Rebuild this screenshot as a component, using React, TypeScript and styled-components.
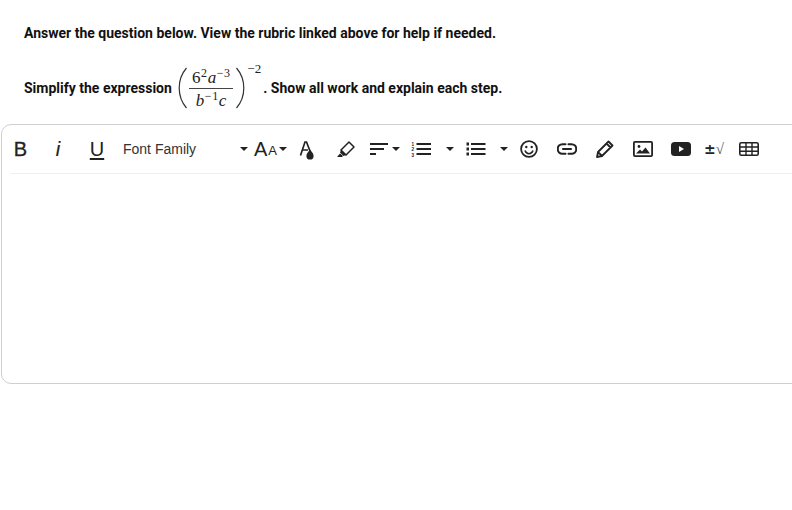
import React from "react";
import styled, { createGlobalStyle } from "styled-components";

const Global = createGlobalStyle`
  html, body { margin: 0; padding: 0; background: #fff; }
  body { width: 792px; height: 510px; overflow: hidden; font-family: Roboto, "Liberation Sans", sans-serif; }
`;
const Page = styled.div`
  width: 792px;
  height: 510px;
  overflow: hidden;
  padding-top: 24px;
  box-sizing: border-box;
`;
const Prompt = styled.p`
  margin: 0 0 0 24px;
  height: 18px;
  font-size: 14px;
  line-height: 18px;
  font-weight: 700;
  color: #111;
  white-space: nowrap;
`;
const ExpressionLine = styled.div`
  margin: 24px 0 0 24px;
  height: 44px;
  display: flex;
  align-items: center;
  font-size: 14px;
  font-weight: 700;
  color: #111;
  white-space: nowrap;
`;
const Formula = styled.span`
  display: flex;
  align-items: center;
  position: relative;
  width: 86px;
  height: 44px;
  margin-left: 2px;
  font-family: "Liberation Serif", serif;
  font-weight: 400;
  color: #222;
`;
const Paren = styled.svg`
  flex: none;
  width: 11px;
  height: 42px;
`;
const Fraction = styled.span`
  display: flex;
  flex-direction: column;
  align-items: center;
  width: 44px;
  margin: 0 2px 0 1px;
`;
const FracTop = styled.span`
  height: 22px;
  line-height: 24px;
  font-size: 17px;
  border-bottom: 1px solid #444;
  width: 100%;
  text-align: center;
  letter-spacing: 0.6px;
`;
const FracBottom = styled.span`
  height: 21px;
  line-height: 23px;
  font-size: 17px;
  letter-spacing: 0.6px;
`;
const Sup = styled.sup`
  font-size: 12px;
  line-height: 0;
  vertical-align: 6px;
`;
const Var = styled.i`
  font-style: italic;
`;
const Exponent = styled.span`
  position: absolute;
  left: 70px;
  top: -4px;
  font-size: 13px;
  line-height: 14px;
`;
const Editor = styled.section`
  margin: 14px 0 0 1px;
  width: 820px;
  height: 260px;
  box-sizing: border-box;
  border: 1px solid #cfcfcf;
  border-radius: 10px;
`;
const Toolbar = styled.div`
  display: flex;
  align-items: center;
  height: 48px;
  color: #222;
`;
const Rule = styled.div`
  height: 1px;
  margin-left: 9px;
  background: #efefef;
`;
const Tool = styled.span<{ $w: number }>`
  flex: none;
  width: ${(p) => p.$w}px;
  height: 48px;
  display: flex;
  align-items: center;
  justify-content: center;
  font-family: "Liberation Sans", Arial, sans-serif;
  color: #222;
`;
const Bold = styled(Tool)`
  font-size: 20px;
  padding-left: 1px;
  box-sizing: border-box;
  -webkit-text-stroke: 0.3px #222;
`;
const Italic = styled(Tool)`
  font-size: 20px;
  font-style: italic;
  -webkit-text-stroke: 0.2px #222;
`;
const Under = styled(Tool)`
  font-size: 20px;
  text-decoration: underline;
  text-decoration-thickness: 2px;
  text-underline-offset: 2px;
`;
const FontSelect = styled(Tool)`
  justify-content: space-between;
  padding: 0 4px 0 7px;
  box-sizing: border-box;
  font-size: 14px;
  color: #333;
`;
const SizeLabel = styled(Tool)`
  font-size: 20px;
  justify-content: flex-start;
  padding-left: 2px;
  box-sizing: border-box;
  gap: 2px;
`;
const SmallA = styled.span`
  font-size: 13px;
  margin-left: -1px;
  padding-top: 3px;
`;
const MathLabel = styled(Tool)`
  font-size: 14px;
  font-weight: 700;
  font-family: "DejaVu Sans", sans-serif;
`;
const Root = styled.span`
  font-weight: 400;
  font-family: "Liberation Serif", serif;
  color: #555;
  font-size: 15px;
`;
const ListNumber = styled.text`
  font-family: "Liberation Sans", sans-serif;
  font-size: 4.6px;
  font-weight: 700;
  fill: #222;
`;

const Caret = () => (
  <svg width="8" height="4" viewBox="0 0 8 4"><path d="M0 0h8L4 4z" fill="#222" /></svg>
);

export default function App() {
  return (
    <Page>
      <Global />
      <Prompt>Answer the question below. View the rubric linked above for help if needed.</Prompt>
      <ExpressionLine>
        <span>Simplify the expression&nbsp;</span>
        <Formula>
          <Paren viewBox="0 0 11 42"><path d="M9.500 1C3.500 8 2.200 14 2.200 21s1.300 13 7.300 20" fill="none" stroke="#333" strokeWidth="1.200" /></Paren>
          <Fraction>
            <FracTop>6<Sup>2</Sup><Var>a</Var><Sup>−3</Sup></FracTop>
            <FracBottom><Var>b</Var><Sup>−1</Sup><Var>c</Var></FracBottom>
          </Fraction>
          <Paren viewBox="0 0 11 42"><path d="M1.500 1c6 7 7.300 13 7.300 20s-1.300 13-7.300 20" fill="none" stroke="#333" strokeWidth="1.200" /></Paren>
          <Exponent>−2</Exponent>
        </Formula>
        <span>. Show all work and explain each step.</span>
      </ExpressionLine>
      <Editor>
        <Toolbar>
          <Bold $w={36}>B</Bold>
          <Italic $w={40}>i</Italic>
          <Under $w={38}>U</Under>
          <FontSelect $w={136}>Font Family<Caret /></FontSelect>
          <SizeLabel $w={36}>A<SmallA>A</SmallA><Caret /></SizeLabel>
          <Tool $w={38}>
            <svg width="18" height="22" viewBox="0 0 18 22"><path d="M2.500 17.500 7 4h1.500L12 13M4.500 12H10" fill="none" stroke="#222" strokeWidth="1.700" /><path d="M12 11.500c2.300 3 3.600 4.500 3.600 6.400a3.600 3.600 0 0 1-7.200 0c0-1.900 1.300-3.400 3.600-6.400z" fill="#222" /></svg>
          </Tool>
          <Tool $w={38}>
            <svg width="20" height="18" viewBox="0 0 20 18"><path d="M14 2l5 5-8 8-5-5z" fill="none" stroke="#222" strokeWidth="1.500" strokeLinejoin="round" /><path d="M6 10l5 5-2.500 1L5 12.500z" fill="#222" /><path d="M2 17l3-3.500 3 2.500-1 1z" fill="#222" /></svg>
          </Tool>
          <Tool $w={40}>
            <svg width="32" height="16" viewBox="0 0 32 16"><path d="M2 3h18M2 8h14M2 13h6" stroke="#222" strokeWidth="2" /><path d="M24 6h8l-4 4z" fill="#222" /></svg>
          </Tool>
          <Tool $w={34}>
            <svg width="20" height="18" viewBox="0 0 20 18"><path d="M5.500 4H20M5.500 9H20M5.500 14H20" stroke="#222" strokeWidth="2" /><ListNumber x="0.500" y="5.800">1</ListNumber><ListNumber x="0.500" y="11.300">2</ListNumber><ListNumber x="0.500" y="16.800">3</ListNumber></svg>
          </Tool>
          <Tool $w={24}><Caret /></Tool>
          <Tool $w={28}>
            <svg width="20" height="16" viewBox="0 0 20 16"><path d="M5 3h14.500M5 8h14.500M5 13h14.500" stroke="#222" strokeWidth="2" /><path d="M.5 1.500h2.500v3H.5zM.5 6.500h2.500v3H.5zM.5 11.500h2.500v3H.5z" fill="#222" /></svg>
          </Tool>
          <Tool $w={28}><Caret /></Tool>
          <Tool $w={22}>
            <svg width="18" height="18" viewBox="0 0 18 18"><circle cx="9" cy="9" r="7.900" fill="none" stroke="#222" strokeWidth="1.800" /><circle cx="6.300" cy="7" r="1.200" fill="#222" /><circle cx="11.700" cy="7" r="1.200" fill="#222" /><path d="M5 10.500c1 2.600 2.500 3.300 4 3.300s3-.7 4-3.300" fill="none" stroke="#222" strokeWidth="1.600" /></svg>
          </Tool>
          <Tool $w={54}>
            <svg width="20" height="12" viewBox="0 0 20 12"><path d="M8.500 1.200H5.500a4.800 4.800 0 0 0 0 9.600h3M11.500 1.200h3a4.800 4.800 0 0 1 0 9.600h-3M6 6h8" fill="none" stroke="#222" strokeWidth="2.100" strokeLinecap="round" /></svg>
          </Tool>
          <Tool $w={22}>
            <svg width="18" height="18" viewBox="0 0 18 18"><path d="M1 17l1-5L12.500 1.500l4 4L6 16zM10.500 3.500l4 4M2 12l4 4" fill="none" stroke="#222" strokeWidth="1.800" strokeLinejoin="round" /></svg>
          </Tool>
          <Tool $w={54}>
            <svg width="20" height="16" viewBox="0 0 20 16"><rect x=".9" y=".9" width="18.200" height="14.200" rx="1" fill="none" stroke="#222" strokeWidth="1.800" /><circle cx="6" cy="5.500" r="1.400" fill="#222" /><path d="M3 12.500 7 8.500l2 2 3.500-4 4.500 6z" fill="#222" /></svg>
          </Tool>
          <Tool $w={22}>
            <svg width="20" height="14" viewBox="0 0 20 14"><rect width="20" height="14" rx="3.500" fill="#222" /><path d="M8 4v6l5-3z" fill="#fff" /></svg>
          </Tool>
          <MathLabel $w={44}>±<Root>√</Root></MathLabel>
          <Tool $w={26}>
            <svg width="20" height="14" viewBox="0 0 20 14"><rect x=".8" y=".8" width="18.400" height="12.400" rx="1.500" fill="none" stroke="#222" strokeWidth="1.600" /><path d="M.8 5h18.400M.8 9.200h18.400M7 .8v12.400M13 .8v12.400" stroke="#222" strokeWidth="1.400" /></svg>
          </Tool>
        </Toolbar>
        <Rule />
      </Editor>
    </Page>
  );
}
